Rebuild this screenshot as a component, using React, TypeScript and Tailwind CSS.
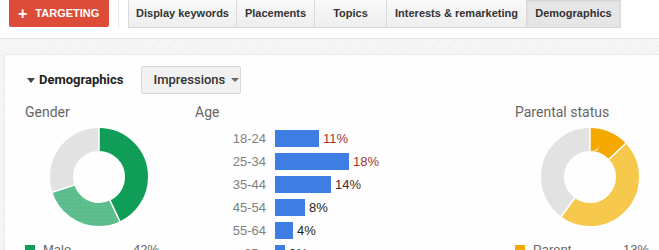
import React from 'react';

const arial = { fontFamily: '"Liberation Sans", Arial, sans-serif' };
const roboto = { fontFamily: 'Roboto, "Liberation Sans", sans-serif' };

interface Slice {
  value: number;
  color: string;
  dotted?: boolean;
}

// donut drawn with stroked circles, starts at 12 o'clock and runs clockwise
const Donut: React.FC<{ slices: Slice[] }> = ({ slices }) => {
  const r = 37.5;
  const c = 2 * Math.PI * r;
  let acc = 0;
  return (
    <svg width="100" height="100" viewBox="0 0 100 100">
      <defs>
        <pattern id="dots" width="4" height="4" patternUnits="userSpaceOnUse">
          <rect width="4" height="4" fill="#5bbd8c" />
          <rect x="1" y="1" width="1" height="1" fill="#78c9a0" />
        </pattern>
      </defs>
      <g transform="rotate(-90 50 50)">
        {slices.map((s, i) => {
          const len = (s.value / 100) * c;
          const el = (
            <circle
              key={i}
              cx="50"
              cy="50"
              r={r}
              fill="none"
              stroke={s.dotted ? 'url(#dots)' : s.color}
              strokeWidth="23"
              strokeDasharray={`${len} ${c - len}`}
              strokeDashoffset={-acc}
            />
          );
          acc += len;
          return el;
        })}
        {(() => {
          let a = 0;
          return slices.map((s, i) => {
            const ang = (a / 100) * 2 * Math.PI;
            a += s.value;
            return (
              <line
                key={'l' + i}
                x1={50 + 25 * Math.cos(ang)}
                y1={50 + 25 * Math.sin(ang)}
                x2={50 + 50 * Math.cos(ang)}
                y2={50 + 50 * Math.sin(ang)}
                stroke="#fff"
                strokeWidth="1.5"
              />
            );
          });
        })()}
      </g>
    </svg>
  );
};

const tabs = [
  { t: 'Display keywords', w: 'w-[109px]' },
  { t: 'Placements', w: 'w-[78px]' },
  { t: 'Topics', w: 'w-[72px]' },
  { t: 'Interests & remarketing', w: 'w-[140px]' },
  { t: 'Demographics', w: 'w-[94px]' },
];

const ages = [
  { label: '18-24', w: 44, pct: '11%', color: 'text-[#a3342b]' },
  { label: '25-34', w: 74, pct: '18%', color: 'text-[#a3342b]' },
  { label: '35-44', w: 56, pct: '14%', color: 'text-[#4a2b2b]' },
  { label: '45-54', w: 30, pct: '8%', color: 'text-[#222]' },
  { label: '55-64', w: 18, pct: '4%', color: 'text-[#222]' },
  { label: '65+', w: 10, pct: '3%', color: 'text-[#222]' },
];

export default function App() {
  return (
    <div className="w-[659px] h-[250px] overflow-hidden bg-white">
      {/* top bar */}
      <div className="h-[39px] flex items-start border-b border-[#e6e6e6] pl-[9px]">
        <div
          className="shrink-0 h-[27px] w-[100px] bg-[#dd4b39] rounded-b-[2px] flex items-center pl-[9px] gap-[8px] text-white font-bold text-[11px] whitespace-nowrap"
          style={arial}
        >
          <span className="text-[16px] leading-none">+</span>
          <span>TARGETING</span>
        </div>
        <div className="shrink-0 w-px h-[28px] bg-[#e8e8e8] ml-[9px]" />
        <div className="flex ml-[9px] h-[28px]" style={arial}>
          {tabs.map(({ t, w }, i) => {
            const active = t === 'Demographics';
            return (
              <div
                key={t}
                className={`${w} shrink-0 h-full flex items-center justify-center whitespace-nowrap text-[11px] font-bold text-[#333] border-b border-r border-[#d9d9d9] ${
                  i === 0 ? 'border-l' : ''
                } ${
                  active
                    ? 'bg-[#e6e6e6] shadow-[inset_0_1px_2px_rgba(0,0,0,0.1)]'
                    : 'bg-gradient-to-b from-[#f9f9f9] to-[#eeeeee]'
                }`}
              >
                {t}
              </div>
            );
          })}
        </div>
      </div>

      {/* hatched band */}
      <div className="h-[15px] bg-[repeating-linear-gradient(135deg,#f7f7f7_0px,#f7f7f7_2px,#f1f1f1_2px,#f1f1f1_3px)]" />

      {/* card */}
      <div className="pl-[4px] bg-[repeating-linear-gradient(135deg,#f7f7f7_0px,#f7f7f7_2px,#f1f1f1_2px,#f1f1f1_3px)]">
        <div className="bg-[#fdfefd] border-l border-t border-[#e9e9e9] h-[200px] pl-[20px] pt-[11px]" style={roboto}>
          <div className="flex items-center h-[28px]">
            <svg width="8" height="5" viewBox="0 0 8 5" className="ml-[2px]">
              <path d="M0 0h8L4 5z" fill="#444" />
            </svg>
            <span className="ml-[4px] text-[13px] font-bold text-[#222]">Demographics</span>
            <div className="ml-[17px] h-[28px] w-[100px] bg-[#f1f1f1] border border-[#d8d8d8] rounded-[2px] flex items-center pl-[12px] gap-[6px] text-[13px] font-medium text-[#333]">
              Impressions
              <svg width="8" height="4" viewBox="0 0 8 4">
                <path d="M0 0h8L4 4z" fill="#666" />
              </svg>
            </div>
          </div>

          <div className="flex mt-[10px]">
            {/* gender */}
            <div className="w-[170px] flex flex-col">
              <div className="text-[14px] text-[#666] leading-[17px]">Gender</div>
              <div className="ml-[24px] mt-[6px]">
                <Donut
                  slices={[
                    { value: 43, color: '#0f9d58' },
                    { value: 27, color: '#57bb8a', dotted: true },
                    { value: 30, color: '#e2e2e2' },
                  ]}
                />
              </div>
              <div className="flex items-center mt-[13px] text-[13px] text-[#666]" style={arial}>
                <span className="w-[10px] h-[10px] bg-[#0f9d58]" />
                <span className="ml-[8px] w-[90px]">Male</span>
                <span>42%</span>
              </div>
            </div>

            {/* age */}
            <div className="w-[320px] flex flex-col">
              <div className="text-[14px] text-[#666] leading-[17px]">Age</div>
              <div className="flex flex-col gap-[6px] mt-[9px]" style={arial}>
                {ages.map((a) => (
                  <div key={a.label} className="flex items-center h-[17px]">
                    <span className="w-[71px] text-right text-[13px] text-[#808080]">{a.label}</span>
                    <span className="ml-[9px] h-[17px] bg-[#3e7ee4]" style={{ width: a.w }} />
                    <span className={`ml-[4px] text-[13px] ${a.color}`}>{a.pct}</span>
                  </div>
                ))}
              </div>
            </div>

            {/* parental */}
            <div className="flex flex-col">
              <div className="text-[14px] text-[#666] leading-[17px]">Parental status</div>
              <div className="ml-[25px] mt-[6px]">
                <Donut
                  slices={[
                    { value: 13, color: '#f5a800' },
                    { value: 47, color: '#f6c94d' },
                    { value: 40, color: '#e2e2e2' },
                  ]}
                />
              </div>
              <div className="flex items-center mt-[13px] text-[13px] text-[#666]" style={arial}>
                <span className="w-[10px] h-[10px] bg-[#f5a800]" />
                <span className="ml-[8px] w-[90px]">Parent</span>
                <span>13%</span>
              </div>
            </div>
          </div>
        </div>
      </div>
    </div>
  );
}
